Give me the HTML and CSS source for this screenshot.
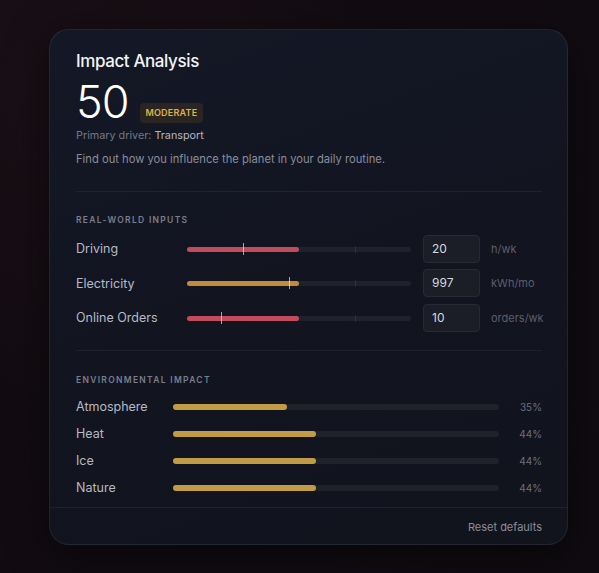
FILE: index.html
```html
<!DOCTYPE html>
<html lang="en">
<head>
    <meta charset="UTF-8">
    <title>Impact Analysis</title>
    <link rel="stylesheet" href="styles.css">
</head>
<body>

<div class="card">
    <div class="card-body">
        <div class="summary">
            <h1>Impact Analysis</h1>
            <div class="score-row">
                <span class="score">50</span>
                <span class="badge">MODERATE</span>
            </div>
            <div class="driver">Primary driver: <span>Transport</span></div>
            <p class="intro">Find out how you influence the planet in your daily routine.</p>
        </div>

        <div class="section inputs">
            <div class="section-title">REAL-WORLD INPUTS</div>

            <div class="input-row">
                <div class="input-label">Driving</div>
                <div class="slider">
                    <div class="slider-track"></div>
                    <div class="slider-fill red" style="width: 50%"></div>
                    <div class="slider-tick" style="left: 75%"></div>
                    <div class="slider-thumb" style="left: 25%"></div>
                </div>
                <div class="value-box">20</div>
                <div class="unit">h/wk</div>
            </div>

            <div class="input-row">
                <div class="input-label">Electricity</div>
                <div class="slider">
                    <div class="slider-track"></div>
                    <div class="slider-fill orange" style="width: 50%"></div>
                    <div class="slider-tick" style="left: 75%"></div>
                    <div class="slider-thumb" style="left: 45.5%"></div>
                </div>
                <div class="value-box">997</div>
                <div class="unit">kWh/mo</div>
            </div>

            <div class="input-row">
                <div class="input-label">Online Orders</div>
                <div class="slider">
                    <div class="slider-track"></div>
                    <div class="slider-fill red" style="width: 50%"></div>
                    <div class="slider-tick" style="left: 75%"></div>
                    <div class="slider-thumb" style="left: 15%"></div>
                </div>
                <div class="value-box">10</div>
                <div class="unit">orders/wk</div>
            </div>
        </div>

        <div class="section impact">
            <div class="section-title">ENVIRONMENTAL IMPACT</div>

            <div class="impact-row">
                <div class="impact-label">Atmosphere</div>
                <div class="bar"><div class="bar-fill" style="width: 35%"></div></div>
                <div class="pct">35%</div>
            </div>
            <div class="impact-row">
                <div class="impact-label">Heat</div>
                <div class="bar"><div class="bar-fill" style="width: 44%"></div></div>
                <div class="pct">44%</div>
            </div>
            <div class="impact-row">
                <div class="impact-label">Ice</div>
                <div class="bar"><div class="bar-fill" style="width: 44%"></div></div>
                <div class="pct">44%</div>
            </div>
            <div class="impact-row">
                <div class="impact-label">Nature</div>
                <div class="bar"><div class="bar-fill" style="width: 44%"></div></div>
                <div class="pct">44%</div>
            </div>
        </div>
    </div>

    <div class="card-footer">
        <span class="reset">Reset defaults</span>
    </div>
</div>

</body>
</html>
```

FILE: styles.css
```css
body, html {
    margin: 0;
    padding: 0;
    height: 100%;
}

body {
    font-family: 'Inter', 'Noto Sans', sans-serif;
    background: radial-gradient(circle at 10% 15%, #1a0f16 0%, #120c12 45%, #0f0b10 100%);
    color: #ffffff;
    overflow: hidden;
}

.card {
    width: 517px;
    margin: 29px 0 0 49px;
    background: linear-gradient(160deg, #141826 0%, #121420 50%, #11131d 100%);
    border: 1px solid rgba(255, 255, 255, 0.07);
    border-radius: 20px;
    box-shadow: 0 10px 40px rgba(0, 0, 0, 0.5);
}

.card-body {
    padding: 19px 25px 0 26px;
}

.summary {
    padding-bottom: 23px;
    border-bottom: 1px solid rgba(255, 255, 255, 0.06);
}

h1 {
    margin: 0;
    font-size: 17px;
    font-weight: 500;
    line-height: 24px;
    letter-spacing: -0.4px;
    color: #f3f4f6;
}

.score-row {
    display: flex;
    align-items: flex-end;
    gap: 11px;
    margin-top: 6px;
}

.score {
    font-size: 45px;
    font-weight: 300;
    line-height: 46px;
    letter-spacing: -1px;
    color: #ffffff;
}

.badge {
    height: 20px;
    line-height: 20px;
    padding: 0 6px;
    margin-bottom: 2px;
    font-size: 9px;
    font-weight: 600;
    letter-spacing: 0.2px;
    color: #dfb24a;
    background: #2a2520;
    border-radius: 4px;
}

.driver {
    margin-top: 3px;
    font-size: 10.8px;
    line-height: 16px;
    color: #737887;
}

.driver span {
    color: #b3b7c2;
}

.intro {
    margin: 6px 0 0 0;
    font-size: 11.2px;
    line-height: 18px;
    color: #8a8e9b;
}

.section {
    padding-top: 21px;
}

.inputs {
    padding-bottom: 18px;
    border-bottom: 1px solid rgba(255, 255, 255, 0.06);
}

.impact {
    padding-top: 22px;
    padding-bottom: 10px;
}

.section-title {
    font-size: 8.5px;
    font-weight: 600;
    line-height: 14px;
    letter-spacing: 1.3px;
    color: #7a7f8d;
}

.input-row {
    display: flex;
    align-items: center;
    height: 28px;
    margin-top: 6.5px;
}

.inputs .section-title + .input-row {
    margin-top: 7.5px;
}

.input-label {
    width: 111px;
    font-size: 12.5px;
    color: #b6bac5;
}

.slider {
    position: relative;
    flex: 1;
    height: 14px;
}

.slider-track,
.slider-fill {
    position: absolute;
    left: 0;
    top: 5px;
    height: 5px;
    border-radius: 3px;
}

.slider-track {
    width: 100%;
    background: #1f212b;
}

.slider-fill.red {
    background: #c24b5c;
}

.slider-fill.orange {
    background: #c38a3c;
}

.slider-tick {
    position: absolute;
    top: 4px;
    width: 1px;
    height: 7px;
    background: rgba(255, 255, 255, 0.08);
}

.slider-thumb {
    position: absolute;
    top: 1px;
    width: 1px;
    height: 12px;
    background: rgba(235, 225, 230, 0.7);
}

.value-box {
    width: 57px;
    height: 28px;
    box-sizing: border-box;
    margin-left: 12px;
    padding: 0 8px;
    line-height: 26px;
    font-size: 12px;
    color: #d6d9e0;
    background: #1b1d27;
    border: 1px solid #272a35;
    border-radius: 4px;
}

.unit {
    width: 51px;
    padding-left: 11px;
    font-size: 11px;
    color: #5a5f6d;
    white-space: nowrap;
}

.impact-row {
    display: flex;
    align-items: center;
    height: 18px;
    margin-top: 9px;
}

.impact .section-title + .impact-row {
    margin-top: 11px;
}

.impact-label {
    width: 97px;
    font-size: 12.5px;
    color: #b6bac5;
}

.bar {
    width: 326px;
    height: 6px;
    border-radius: 3px;
    background: #1f212b;
}

.bar-fill {
    height: 100%;
    border-radius: 3px;
    background: #c29c45;
}

.pct {
    flex: 1;
    text-align: right;
    font-size: 10px;
    color: #6b707d;
}

.card-footer {
    padding: 9px 25px 9px 25px;
    line-height: 16px;
    border-top: 1px solid rgba(255, 255, 255, 0.06);
    text-align: right;
}

.reset {
    font-size: 11px;
    line-height: 16px;
    color: #8a8e9a;
}
```
